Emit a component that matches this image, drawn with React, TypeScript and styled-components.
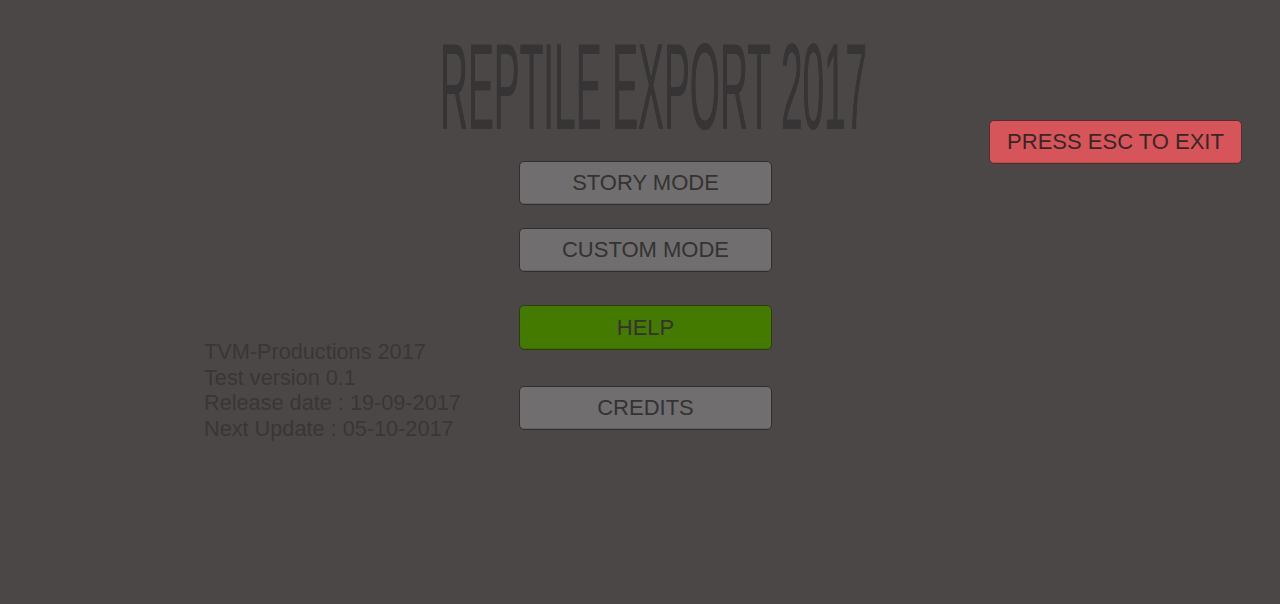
import React from 'react';
import styled, { createGlobalStyle } from 'styled-components';

const GlobalStyle = createGlobalStyle`
  html, body {
    margin: 0;
    padding: 0;
    overflow: hidden;
    background: #4b4747;
  }
`;

const Screen = styled.div`
  width: 1280px;
  height: 604px;
  background: #4b4747;
  font-family: "Liberation Sans", Arial, sans-serif;
  display: flex;
  flex-direction: column;
  overflow: hidden;
`;

const Header = styled.div`
  display: grid;
  grid-template-columns: 440px 430px 119px 253px 1fr;
  height: 161px;
`;

const TitleBox = styled.div`
  grid-column: 2;
  padding-top: 37px;
  width: 430px;
  overflow: hidden;
`;

const TitleText = styled.h1`
  display: inline-block;
  margin: 0;
  font-size: 123px;
  line-height: 100px;
  font-weight: 400;
  color: #363434;
  white-space: nowrap;
  transform: scaleX(0.315);
  transform-origin: left top;
  text-shadow: 0 0 1px #363434;
`;

const Body = styled.div`
  display: grid;
  grid-template-columns: 204px 315px 253px;
  align-items: start;
`;

const Info = styled.div`
  grid-column: 2;
  margin-top: 178px;
  font-size: 21.7px;
  line-height: 25.7px;
  color: #393636;
`;

const Menu = styled.div`
  grid-column: 3;
  display: flex;
  flex-direction: column;
`;

const Button = styled.button<{ $tone?: 'gray' | 'green' | 'red'; $gap?: number; $tall?: boolean }>`
  box-sizing: border-box;
  width: 253px;
  height: ${(p) => (p.$tall ? 45 : 44)}px;
  margin-top: ${(p) => p.$gap ?? 0}px;
  border: 1px solid ${(p) => (p.$tone === 'red' ? '#5a2a2c' : p.$tone === 'green' ? '#2a3f0c' : '#2f2d2d')};
  border-radius: 5px;
  background: ${(p) => (p.$tone === 'red' ? '#d6555a' : p.$tone === 'green' ? '#457a00' : '#706e6e')};
  box-shadow: inset 0 -1px 0 rgba(0, 0, 0, 0.12);
  color: #343232;
  font-family: "Liberation Sans", Arial, sans-serif;
  font-size: 22px;
  padding: 0;
  display: flex;
  align-items: center;
  justify-content: center;
  cursor: pointer;
`;

const ExitButton = styled(Button)`
  grid-column: 4;
  align-self: end;
  margin-bottom: -3px;
  color: #3a2526;
`;

const App = () => (
  <>
    <GlobalStyle />
    <Screen>
      <Header>
        <TitleBox>
          <TitleText>REPTILE EXPORT 2017</TitleText>
        </TitleBox>
        <ExitButton $tone="red">PRESS ESC TO EXIT</ExitButton>
      </Header>
      <Body>
        <Info>
          <div>TVM-Productions 2017</div>
          <div>Test version 0.1</div>
          <div>Release date : 19-09-2017</div>
          <div>Next Update : 05-10-2017</div>
        </Info>
        <Menu>
          <Button>STORY MODE</Button>
          <Button $gap={23}>CUSTOM MODE</Button>
          <Button $tone="green" $gap={33} $tall>HELP</Button>
          <Button $gap={36}>CREDITS</Button>
        </Menu>
      </Body>
    </Screen>
  </>
);

export default App;
